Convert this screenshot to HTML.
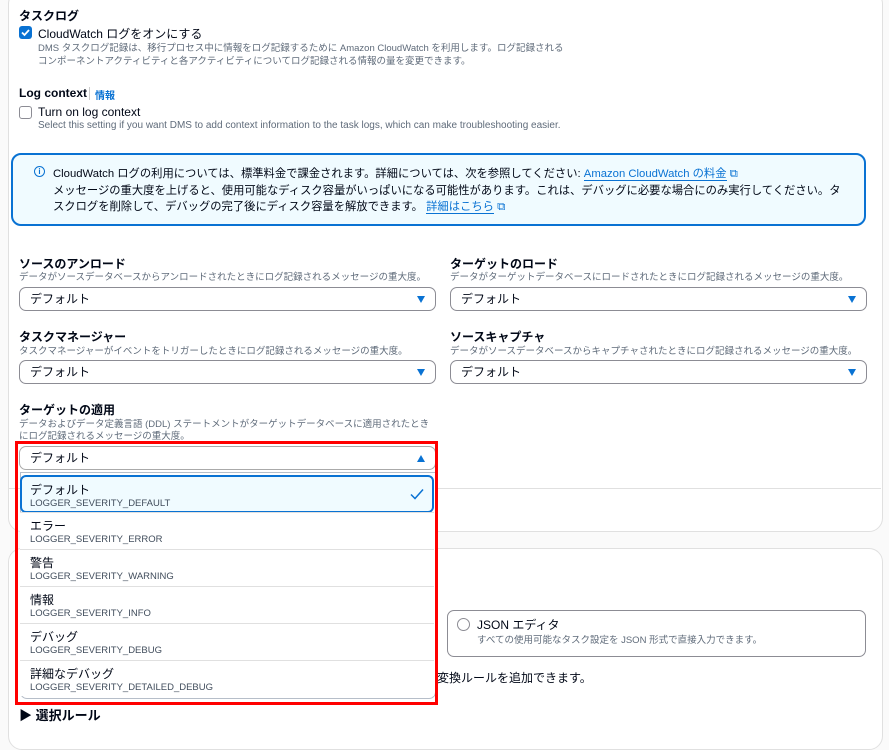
<!DOCTYPE html>
<html><head><meta charset="utf-8"><style>
body{margin:0;width:889px;height:720px;overflow:hidden;background:#fafafa;font-family:"Liberation Sans","Noto Sans CJK JP",sans-serif;color:#000716;position:relative}
.a{position:absolute;white-space:nowrap}
.b{font-weight:bold;font-size:12px}
.t{font-size:12px}
.d{font-size:9.5px;color:#5f6b7a}
.sel{position:absolute;height:22px;border:1px solid #8c8c94;border-radius:7px;background:#fff;font-size:12px;line-height:22px;padding-left:10px;box-sizing:content-box}
.sel i{position:absolute;right:10px;top:8px;width:0;height:0;border-left:4.5px solid transparent;border-right:4.5px solid transparent;border-top:7px solid #0972d3}
.opt{position:absolute;left:20px;width:414px;height:36px;border-top:1px solid #e0e0e0;background:#fff}
.opt .l{position:absolute;left:10px;top:4px;font-size:12px}
.opt .c{position:absolute;left:10px;top:21px;font-size:9.5px;color:#414d5c}
.link{color:#0972d3}
</style></head><body>
<div class="a" style="left:8px;top:-10px;width:873px;height:540px;background:#fff;border:1px solid #e0e0e0;border-radius:14px"></div>
<div class="a" style="left:8px;top:488px;width:873px;height:1px;background:#e0e0e0"></div>
<div class="a" style="left:8px;top:548px;width:873px;height:200px;background:#fff;border:1px solid #e0e0e0;border-radius:14px"></div>

<div class="a b" style="left:19px;top:7px">タスクログ</div>
<div class="a" style="left:19px;top:26px;width:13px;height:13px;background:#0972d3;border-radius:3px"><svg width="13" height="13"><path d="M3 6.5l2.5 2.5 4.5-5" stroke="#fff" stroke-width="1.8" fill="none"/></svg></div>
<div class="a t" style="left:38px;top:25px">CloudWatch ログをオンにする</div>
<div class="a d" style="left:38px;top:40px">DMS タスクログ記録は、移行プロセス中に情報をログ記録するために Amazon CloudWatch を利用します。ログ記録される</div>
<div class="a d" style="left:38px;top:53px">コンポーネントアクティビティと各アクティビティについてログ記録される情報の量を変更できます。</div>

<div class="a b" style="left:19px;top:86px">Log context</div>
<div class="a" style="left:89px;top:87px;width:1px;height:13px;background:#ccc"></div>
<div class="a link" style="left:95px;top:87px;font-size:10px;font-weight:bold">情報</div>
<div class="a" style="left:19px;top:106px;width:11px;height:11px;border:1.5px solid #8c8c94;border-radius:3px;background:#fff"></div>
<div class="a t" style="left:38px;top:105px">Turn on log context</div>
<div class="a d" style="left:38px;top:120px;font-size:10px">Select this setting if you want DMS to add context information to the task logs, which can make troubleshooting easier.</div>

<div class="a" style="left:11px;top:153px;width:851px;height:69px;background:#f0fbff;border:2px solid #0972d3;border-radius:10px"></div>
<div class="a" style="left:34px;top:166px;width:9px;height:9px;border:1.5px solid #0972d3;border-radius:50%;font-size:8px;color:#0972d3;text-align:center;line-height:9px;font-weight:bold">i</div>
<div class="a" style="left:53px;top:165px;font-size:11.3px">CloudWatch ログの利用については、標準料金で課金されます。詳細については、次を参照してください: <span class="link" style="border-bottom:1px solid #0972d3">Amazon CloudWatch の料金</span> <span class="link">⧉</span></div>
<div class="a" style="left:53px;top:182px;font-size:11.3px">メッセージの重大度を上げると、使用可能なディスク容量がいっぱいになる可能性があります。これは、デバッグに必要な場合にのみ実行してください。タ</div>
<div class="a" style="left:53px;top:198px;font-size:11.3px">スクログを削除して、デバッグの完了後にディスク容量を解放できます。 <span class="link" style="border-bottom:1px solid #0972d3">詳細はこちら</span> <span class="link">⧉</span></div>

<div class="a b" style="left:19px;top:255px">ソースのアンロード</div>
<div class="a d" style="left:19px;top:269px">データがソースデータベースからアンロードされたときにログ記録されるメッセージの重大度。</div>
<div class="sel" style="left:19px;top:287px;width:405px">デフォルト<i></i></div>
<div class="a b" style="left:450px;top:255px">ターゲットのロード</div>
<div class="a d" style="left:450px;top:269px">データがターゲットデータベースにロードされたときにログ記録されるメッセージの重大度。</div>
<div class="sel" style="left:450px;top:287px;width:405px">デフォルト<i></i></div>

<div class="a b" style="left:19px;top:328px">タスクマネージャー</div>
<div class="a d" style="left:19px;top:343px">タスクマネージャーがイベントをトリガーしたときにログ記録されるメッセージの重大度。</div>
<div class="sel" style="left:19px;top:360px;width:405px">デフォルト<i></i></div>
<div class="a b" style="left:450px;top:328px">ソースキャプチャ</div>
<div class="a d" style="left:450px;top:343px">データがソースデータベースからキャプチャされたときにログ記録されるメッセージの重大度。</div>
<div class="sel" style="left:450px;top:360px;width:405px">デフォルト<i></i></div>

<div class="a b" style="left:19px;top:401px">ターゲットの適用</div>
<div class="a d" style="left:19px;top:416px">データおよびデータ定義言語 (DDL) ステートメントがターゲットデータベースに適用されたとき</div>
<div class="a d" style="left:19px;top:428px">にログ記録されるメッセージの重大度。</div>

<div class="a" style="left:447px;top:610px;width:417px;height:45px;border:1px solid #8c8c94;border-radius:7px;background:#fff"></div>
<div class="a" style="left:457px;top:618px;width:11px;height:11px;border:1.5px solid #8c8c94;border-radius:50%"></div>
<div class="a t" style="left:477px;top:616px">JSON エディタ</div>
<div class="a d" style="left:477px;top:632px">すべての使用可能なタスク設定を JSON 形式で直接入力できます。</div>
<div class="a t" style="left:437px;top:669px">変換ルールを追加できます。</div>
<div class="a b" style="left:19px;top:705px;font-size:13px">▶ 選択ルール</div>

<div class="a" style="left:20px;top:472px;width:414px;height:225px;background:#fff;border:1px solid #b6bec9;border-radius:0 0 7px 7px"></div>
<div class="sel" style="left:19px;top:446px;width:405px;border-color:#aaa">デフォルト<i style="border-top:none;border-bottom:7px solid #0972d3"></i></div>
<div class="opt" style="top:475px;height:34px;border:2px solid #0972d3;border-radius:6px;background:#f0fbff;width:410px"><div class="l" style="left:8px">デフォルト</div><div class="c" style="left:8px">LOGGER_SEVERITY_DEFAULT</div><svg class="a" style="right:8px;top:10px" width="14" height="14"><path d="M1 7.5l4 4 8-9" stroke="#0972d3" stroke-width="1.5" fill="none"/></svg></div>
<div class="opt" style="top:512px"><div class="l">エラー</div><div class="c">LOGGER_SEVERITY_ERROR</div></div>
<div class="opt" style="top:549px"><div class="l">警告</div><div class="c">LOGGER_SEVERITY_WARNING</div></div>
<div class="opt" style="top:586px"><div class="l">情報</div><div class="c">LOGGER_SEVERITY_INFO</div></div>
<div class="opt" style="top:623px"><div class="l">デバッグ</div><div class="c">LOGGER_SEVERITY_DEBUG</div></div>
<div class="opt" style="top:660px;height:35px"><div class="l">詳細なデバッグ</div><div class="c">LOGGER_SEVERITY_DETAILED_DEBUG</div></div>

<div class="a" style="left:15px;top:441px;width:417px;height:258px;border:3px solid #f00"></div>
</body></html>
